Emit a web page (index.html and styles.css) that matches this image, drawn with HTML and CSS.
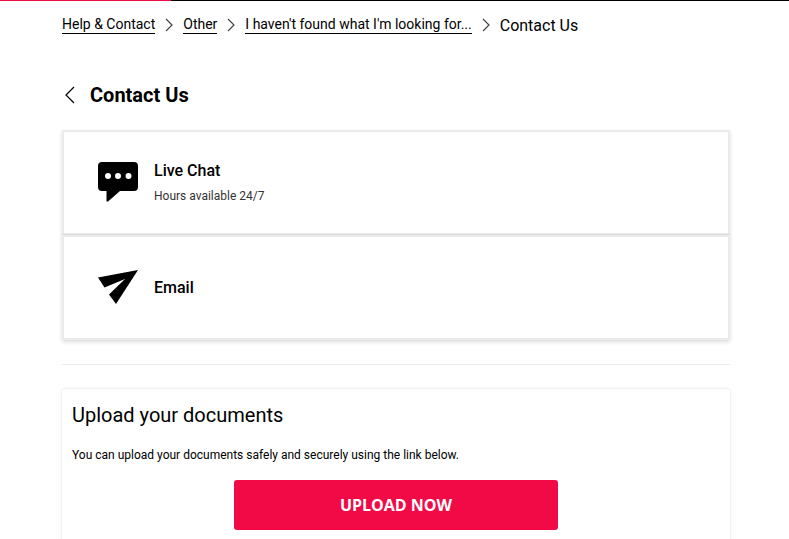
FILE: index.html
```html
<!DOCTYPE html>
<html lang="en">

<head>
    <meta charset="UTF-8">
    <meta name="viewport" content="width=device-width, initial-scale=1.0">
    <title>Contact Us</title>
    <link rel="stylesheet" href="styles.css">
</head>

<body>

    <div class="top-line">
        <div class="top-line-accent"></div>
    </div>

    <div class="page">

        <!-- Breadcrumbs -->
        <nav class="breadcrumbs" aria-label="Breadcrumb">
            <a class="crumb" href="#">Help &amp; Contact</a>
            <svg class="crumb-arrow" viewBox="0 0 8 14"><path d="M1 1l6 6-6 6" /></svg>
            <a class="crumb" href="#">Other</a>
            <svg class="crumb-arrow" viewBox="0 0 8 14"><path d="M1 1l6 6-6 6" /></svg>
            <a class="crumb" href="#">I haven't found what I'm looking for...</a>
            <svg class="crumb-arrow" viewBox="0 0 8 14"><path d="M1 1l6 6-6 6" /></svg>
            <span class="crumb-current">Contact Us</span>
        </nav>

        <!-- Heading -->
        <header class="heading">
            <a class="back" href="#" aria-label="Back">
                <svg class="back-icon" viewBox="0 0 10 18"><path d="M9 1L1 9l8 8" /></svg>
            </a>
            <h1 class="title">Contact Us</h1>
        </header>

        <main>
            <!-- Contact options -->
            <div class="options">
                <a class="option" href="#">
                    <svg class="option-icon" viewBox="0 0 40 40">
                        <path d="M4 0h32a4 4 0 0 1 4 4v21a4 4 0 0 1-4 4H22L10 39.500H8.500V29H4a4 4 0 0 1-4-4V4a4 4 0 0 1 4-4z" />
                        <circle class="dot" cx="10" cy="14" r="3" />
                        <circle class="dot" cx="20" cy="14" r="3" />
                        <circle class="dot" cx="30.500" cy="14" r="3" />
                    </svg>
                    <span class="option-text">
                        <span class="option-name">Live Chat</span>
                        <span class="option-note">Hours available 24/7</span>
                    </span>
                </a>
                <a class="option" href="#">
                    <svg class="option-icon" viewBox="0 0 40 40">
                        <path d="M40 3L0 10.500l6.500 10L27 12 11 27.500 18 37z" />
                    </svg>
                    <span class="option-text">
                        <span class="option-name">Email</span>
                    </span>
                </a>
            </div>

            <hr class="divider">

            <!-- Upload -->
            <section class="upload">
                <h2 class="upload-title">Upload your documents</h2>
                <p class="upload-note">You can upload your documents safely and securely using the link below.</p>
                <button class="upload-button" type="button">UPLOAD NOW</button>
            </section>
        </main>

    </div>

</body>

</html>
```

FILE: styles.css
```css
* {
    margin: 0;
    padding: 0;
    box-sizing: border-box;
}

body {
    background: #fff;
    color: #000;
    font-family: Roboto, "Liberation Sans", sans-serif;
    font-size: 14px;
    overflow: hidden;
}

a {
    color: inherit;
    text-decoration: none;
}

svg {
    display: block;
    flex: none;
}

.top-line {
    height: 1px;
    background: #000;
}

.top-line-accent {
    width: 171px;
    height: 1px;
    background: #f20a46;
}

.page {
    padding: 14px 59px 0 62px;
}

/* Breadcrumbs */
.breadcrumbs {
    display: flex;
    align-items: center;
    gap: 10px;
    height: 20px;
}

.crumb {
    line-height: 17px;
    border-bottom: 1px solid #000;
}

.crumb-arrow {
    width: 8px;
    height: 14px;
    fill: none;
    stroke: #444;
    stroke-width: 1.2;
}

.crumb-current {
    padding-top: 2px;
    font-size: 16px;
    line-height: 20px;
}

/* Heading */
.heading {
    display: flex;
    align-items: center;
    gap: 15px;
    margin: 48px 0 23px;
    padding-left: 3px;
}

.back-icon {
    width: 10px;
    height: 18px;
    fill: none;
    stroke: #000;
    stroke-width: 1.2;
}

.title {
    font-size: 20px;
    font-weight: 700;
    line-height: 24px;
}

/* Contact options */
.options {
    box-shadow: 0 2px 4px rgba(0, 0, 0, 0.14);
}

.option {
    display: flex;
    align-items: center;
    gap: 16px;
    height: 105px;
    padding: 0 34px;
    border: 2px solid #ebebeb;
    background: #fff;
}

.option + .option {
    box-shadow: 0 -1px 1px rgba(0, 0, 0, 0.06);
}

.option-icon {
    width: 40px;
    height: 40px;
    margin-bottom: 2px;
}

.dot {
    fill: #fff;
}

.option-text {
    display: flex;
    flex-direction: column;
    gap: 7px;
}

.option-name {
    font-size: 16px;
    font-weight: 500;
    line-height: 20px;
}

.option-note {
    color: #333;
    font-size: 12px;
    line-height: 16px;
}

.divider {
    height: 1px;
    margin: 24px 0;
    border: 0;
    background: #ebebeb;
}

/* Upload */
.upload {
    display: flex;
    flex-direction: column;
    padding: 14px 10px 16px;
    border-radius: 4px;
    box-shadow: 0 0 3px rgba(0, 0, 0, 0.16);
}

.upload-title {
    font-size: 20px;
    font-weight: 400;
    line-height: 24px;
}

.upload-note {
    margin: 20px 0 17px;
    font-size: 12px;
    line-height: 16px;
}

.upload-button {
    align-self: center;
    width: 50%;
    height: 50px;
    border: 0;
    border-radius: 3px;
    background: #f20a46;
    color: #fff;
    font-family: "Open Sans", Roboto, sans-serif;
    font-size: 16px;
    font-weight: 700;
    cursor: pointer;
}
```
